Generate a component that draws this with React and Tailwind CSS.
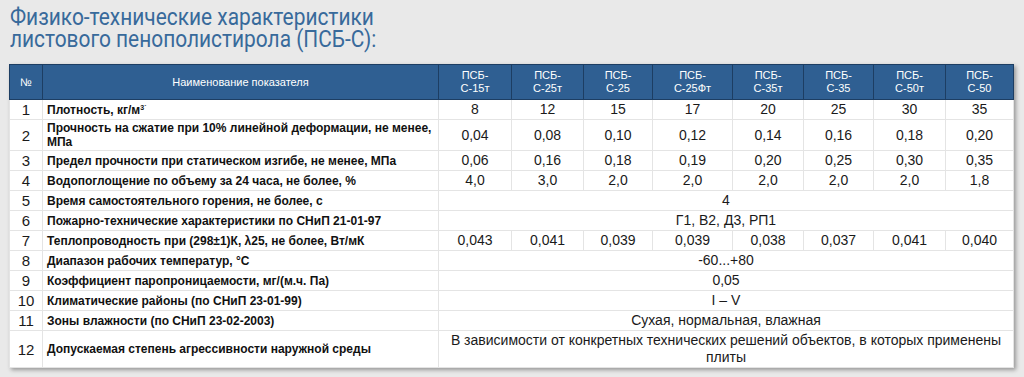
const cols = [
  { name: ["ПСБ-", "С-15т"], w: "w-[73px]" },
  { name: ["ПСБ-", "С-25т"], w: "w-[72px]" },
  { name: ["ПСБ-", "С-25"], w: "w-[69px]" },
  { name: ["ПСБ-", "С-25Фт"], w: "w-[80px]" },
  { name: ["ПСБ-", "С-35т"], w: "w-[71px]" },
  { name: ["ПСБ-", "С-35"], w: "w-[70px]" },
  { name: ["ПСБ-", "С-50т"], w: "w-[72px]" },
  { name: ["ПСБ-", "С-50"], w: "w-[68px]" },
];

const rows = [
  { label: <>Плотность, кг/м<sup className="text-[7px]">3`</sup></>, values: ["8", "12", "15", "17", "20", "25", "30", "35"] },
  { label: "Прочность на сжатие при 10% линейной деформации, не менее, МПа", values: ["0,04", "0,08", "0,10", "0,12", "0,14", "0,16", "0,18", "0,20"] },
  { label: "Предел прочности при статическом изгибе, не менее, МПа", values: ["0,06", "0,16", "0,18", "0,19", "0,20", "0,25", "0,30", "0,35"] },
  { label: "Водопоглощение по объему за 24 часа, не более, %", values: ["4,0", "3,0", "2,0", "2,0", "2,0", "2,0", "2,0", "1,8"] },
  { label: "Время самостоятельного горения, не более, с", span: "4" },
  { label: "Пожарно-технические характеристики по СНиП 21-01-97", span: "Г1, В2, Д3, РП1" },
  { label: "Теплопроводность при (298±1)К, λ25, не более, Вт/мК", values: ["0,043", "0,041", "0,039", "0,039", "0,038", "0,037", "0,041", "0,040"] },
  { label: "Диапазон рабочих температур, °С", span: "-60...+80" },
  { label: "Коэффициент паропроницаемости, мг/(м.ч. Па)", span: "0,05" },
  { label: "Климатические районы (по СНиП 23-01-99)", span: "I – V" },
  { label: "Зоны влажности (по СНиП 23-02-2003)", span: "Сухая, нормальная, влажная" },
  { label: "Допускаемая степень агрессивности наружной среды", span: "В зависимости от конкретных технических решений объектов, в которых применены плиты" },
];

export default function App() {
  return (
    <div className="min-h-screen bg-[#e9e9e9] pt-[6px] font-['Liberation_Sans',Arial,sans-serif]">
      {/* Title */}
      <h1 className="pl-[10px] text-[24px] leading-[22px] text-[#386a9b] font-['Roboto',sans-serif]">
        <span className="inline-block origin-left scale-x-[0.87] whitespace-nowrap">Физико-технические характеристики</span>
        <br />
        <span className="inline-block origin-left scale-x-[0.87] whitespace-nowrap">листового пенополистирола (ПСБ-С):</span>
      </h1>

      {/* Table */}
      <table className="mt-[14px] ml-[9px] w-[1004px] table-fixed border-collapse bg-white shadow-[2px_2px_4px_rgba(0,0,0,0.35)]">
        <colgroup>
          <col className="w-[33px]" />
          <col className="w-[396px]" />
          {cols.map((c, i) => (
            <col key={i} className={c.w} />
          ))}
        </colgroup>
        <thead>
          <tr className="h-[35px] bg-[#2f5f92] text-white text-[11px] leading-[13px]">
            <th className="border border-[#1d3e63] font-normal">№</th>
            <th className="border border-[#1d3e63] font-normal">Наименование показателя</th>
            {cols.map((c, i) => (
              <th key={i} className="border border-[#1d3e63] font-normal">
                {c.name[0]}
                <br />
                {c.name[1]}
              </th>
            ))}
          </tr>
        </thead>
        <tbody className="text-[#1a1a1a]">
          {rows.map((r, i) => (
            <tr key={i}>
              <td className="border border-[#e4e4e4] py-px text-center text-[15px] leading-[17px]">{i + 1}</td>
              <td className="border border-[#e4e4e4] py-px px-[4px] text-[12px] leading-[14px] font-bold text-[#111]">
                {r.label}
              </td>
              {r.values ? (
                r.values.map((v, j) => (
                  <td key={j} className="border border-[#e4e4e4] py-px text-center text-[14px] leading-[17px]">
                    {v}
                  </td>
                ))
              ) : (
                <td colSpan={8} className="border border-[#e4e4e4] py-px px-[4px] text-center text-[14px] leading-[17px]">
                  {r.span}
                </td>
              )}
            </tr>
          ))}
        </tbody>
      </table>
    </div>
  );
}
